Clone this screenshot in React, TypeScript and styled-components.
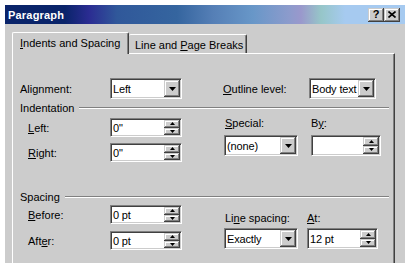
import React from "react"
import styled, { createGlobalStyle } from "styled-components"

const face = "#cccccc"

const GlobalStyle = createGlobalStyle`
  * {
    box-sizing: border-box;
  }
  body {
    margin: 0;
    background: #fff;
    font-family: "Liberation Sans", Arial, sans-serif;
    font-size: 11px;
    color: #000;
  }
`

const Window = styled.div`
  margin: 5px 0 0 5px;
  width: 400px;
  height: 258px;
  background: ${face};
  display: flex;
  flex-direction: column;
  overflow: hidden;
`

const TitleBar = styled.div`
  flex: none;
  height: 19px;
  display: flex;
  align-items: center;
  padding: 0 5px 0 3px;
  background: linear-gradient(
    90deg,
    #0a246a 0%,
    #0a246a 15%,
    #2b2c92 21%,
    #30589a 28%,
    #35659f 43%,
    #557fb6 52%,
    #6897c8 62%,
    #8c9bcc 71%,
    #9a98cc 74%,
    #96c6c8 79%,
    #a6caf0 85%,
    #a6caf0 100%
  );
`

const Title = styled.div`
  flex: 1;
  color: #fff;
  font-weight: bold;
  font-size: 11px;
  letter-spacing: 0.2px;
`

const CaptionButton = styled.div`
  width: 16px;
  height: 14px;
  background: ${face};
  display: flex;
  align-items: center;
  justify-content: center;
  font-weight: bold;
  font-size: 11px;
  line-height: 1;
  box-shadow: inset -1px -1px #404040, inset 1px 1px ${face}, inset -2px -2px #808080,
    inset 2px 2px #fff;
`

const TabStrip = styled.div`
  flex: none;
  display: flex;
  align-items: flex-end;
  height: 22px;
  margin: 8px 0 -1px;
  padding-left: 7px;
  position: relative;
  z-index: 1;
`

const Tab = styled.div<{ $active?: boolean; $w: number }>`
  width: ${(p) => p.$w}px;
  height: ${(p) => (p.$active ? 22 : 19)}px;
  margin-bottom: ${(p) => (p.$active ? 0 : 1)}px;
  padding: ${(p) => (p.$active ? "0 0 1px 7px" : "2px 0 0 6px")};
  display: flex;
  align-items: center;
  background: ${face};
  border-top: 1px solid #fff;
  border-left: ${(p) => (p.$active ? "1px solid #fff" : "none")};
  border-right: 1px solid #404040;
  box-shadow: inset -1px 0 #808080;
  border-radius: 2px 2px 0 0;
  white-space: nowrap;
`

const Panel = styled.div`
  flex: 1;
  margin-left: 7px;
  width: 383px;
  border-top: 1px solid #fff;
  border-left: 1px solid #fff;
  border-right: 1px solid #404040;
  box-shadow: inset -1px 0 #808080;
  padding: 24px 0 0 7px;
`

const Row = styled.div<{ $mt?: number }>`
  display: flex;
  align-items: center;
  margin-top: ${(p) => p.$mt ?? 0}px;
`

const Group = styled.div<{ $w?: number }>`
  display: flex;
  align-items: center;
  flex: none;
  width: ${(p) => (p.$w ? `${p.$w}px` : "auto")};
`

const Label = styled.span<{ $w?: number; $indent?: number }>`
  flex: none;
  width: ${(p) => (p.$w ? `${p.$w}px` : "auto")};
  padding-left: ${(p) => p.$indent ?? 0}px;
  line-height: 12px;
  white-space: nowrap;
`

const GroupHead = styled.div<{ $mt: number }>`
  display: flex;
  align-items: center;
  height: 12px;
  margin: ${(p) => p.$mt}px 5px 0 0;
`

const Rule = styled.div`
  flex: 1;
  height: 2px;
  margin-left: 5px;
  border-top: 1px solid #808080;
  border-bottom: 1px solid #fff;
`

const Columns = styled.div`
  display: flex;
  align-items: flex-start;
`

const LeftCol = styled.div`
  width: 203px;
  flex: none;
`

const RightGrid = styled.div<{ $first: number; $mt: number; $gap: number }>`
  display: grid;
  grid-template-columns: ${(p) => p.$first}px auto;
  row-gap: ${(p) => p.$gap}px;
  margin-top: ${(p) => p.$mt}px;
  padding-left: 1px;
  & > span:first-child {
    padding-left: 1px;
  }
`

const Field = styled.div<{ $w: number; $h: number }>`
  flex: none;
  width: ${(p) => p.$w}px;
  height: ${(p) => p.$h}px;
  display: flex;
  padding: 1px;
  background: #fff;
  border: 1px solid;
  border-color: #808080 #fff #fff #808080;
  box-shadow: inset 1px 1px #404040, inset -1px -1px ${face};
`

const Value = styled.div`
  flex: 1;
  padding-left: 1px;
  display: flex;
  align-items: center;
  white-space: nowrap;
  overflow: hidden;
  letter-spacing: -0.15px;
`

const raised = `
  background: ${face};
  box-shadow: inset -1px -1px #404040, inset 1px 1px ${face}, inset -2px -2px #808080,
    inset 2px 2px #fff;
`

const DropButton = styled.div`
  width: 16px;
  flex: none;
  display: flex;
  align-items: center;
  justify-content: center;
  ${raised}
`

const SpinButtons = styled.div`
  width: 16px;
  flex: none;
  display: flex;
  flex-direction: column;
`

const SpinHalf = styled.div`
  flex: 1;
  display: flex;
  align-items: center;
  justify-content: center;
  ${raised}
`

const DownArrow = () => (
  <svg width="7" height="4" viewBox="0 0 7 4">
    <path d="M0 0h7L3.5 4z" fill="#000" />
  </svg>
)

const SmallArrow = ({ up }: { up?: boolean }) => (
  <svg width="5" height="3" viewBox="0 0 5 3">
    <path d={up ? "M2.5 0L5 3H0z" : "M0 0h5L2.5 3z"} fill="#000" />
  </svg>
)

function Combo({ w, value }: { w: number; value: string }) {
  return (
    <Field $w={w} $h={21}>
      <Value>{value}</Value>
      <DropButton>
        <DownArrow />
      </DropButton>
    </Field>
  )
}

function Spin({ w, h, value }: { w: number; h: number; value: string }) {
  return (
    <Field $w={w} $h={h}>
      <Value>{value}</Value>
      <SpinButtons>
        <SpinHalf>
          <SmallArrow up />
        </SpinHalf>
        <SpinHalf>
          <SmallArrow />
        </SpinHalf>
      </SpinButtons>
    </Field>
  )
}

export default function App() {
  return (
    <>
      <GlobalStyle />
      <Window>
        <TitleBar>
          <Title>Paragraph</Title>
          <CaptionButton>?</CaptionButton>
          <CaptionButton>
            <svg width="8" height="7" viewBox="0 0 8 7">
              <path d="M0.5 0.5L7.5 6.5M7.5 0.5L0.5 6.5" stroke="#000" strokeWidth="1.6" />
            </svg>
          </CaptionButton>
        </TitleBar>

        <TabStrip>
          <Tab $active $w={117}>
            <span>
              <u>I</u>ndents and Spacing
            </span>
          </Tab>
          <Tab $w={118}>
            <span>
              Line and <u>P</u>age Breaks
            </span>
          </Tab>
        </TabStrip>

        <Panel>
          <Row>
            <Group $w={203}>
              <Label $w={90}>
                Ali<u>g</u>nment:
              </Label>
              <Combo w={72} value="Left" />
            </Group>
            <Group>
              <Label $w={86}>
                <u>O</u>utline level:
              </Label>
              <Combo w={67} value="Body text" />
            </Group>
          </Row>

          <GroupHead $mt={3}>
            <span>Indentation</span>
            <Rule />
          </GroupHead>

          <Columns>
            <LeftCol>
              <Row $mt={4}>
                <Label $w={90} $indent={8}>
                  <u>L</u>eft:
                </Label>
                <Spin w={72} h={19} value={'0"'} />
              </Row>
              <Row $mt={6}>
                <Label $w={90} $indent={8}>
                  <u>R</u>ight:
                </Label>
                <Spin w={72} h={19} value={'0"'} />
              </Row>
            </LeftCol>
            <RightGrid $first={87} $mt={3} $gap={6}>
              <Label>
                <u>S</u>pecial:
              </Label>
              <Label>
                B<u>y</u>:
              </Label>
              <Combo w={74} value="(none)" />
              <Spin w={70} h={21} value="" />
            </RightGrid>
          </Columns>

          <GroupHead $mt={29}>
            <span>Spacing</span>
            <Rule />
          </GroupHead>

          <Columns>
            <LeftCol>
              <Row $mt={2}>
                <Label $w={90} $indent={8}>
                  <u>B</u>efore:
                </Label>
                <Spin w={72} h={19} value="0 pt" />
              </Row>
              <Row $mt={7}>
                <Label $w={90} $indent={8}>
                  Aft<u>e</u>r:
                </Label>
                <Spin w={72} h={19} value="0 pt" />
              </Row>
            </LeftCol>
            <RightGrid $first={83} $mt={9} $gap={4}>
              <Label>
                Li<u>n</u>e spacing:
              </Label>
              <Label>
                <u>A</u>t:
              </Label>
              <Combo w={74} value="Exactly" />
              <Spin w={71} h={21} value="12 pt" />
            </RightGrid>
          </Columns>
        </Panel>
      </Window>
    </>
  )
}
